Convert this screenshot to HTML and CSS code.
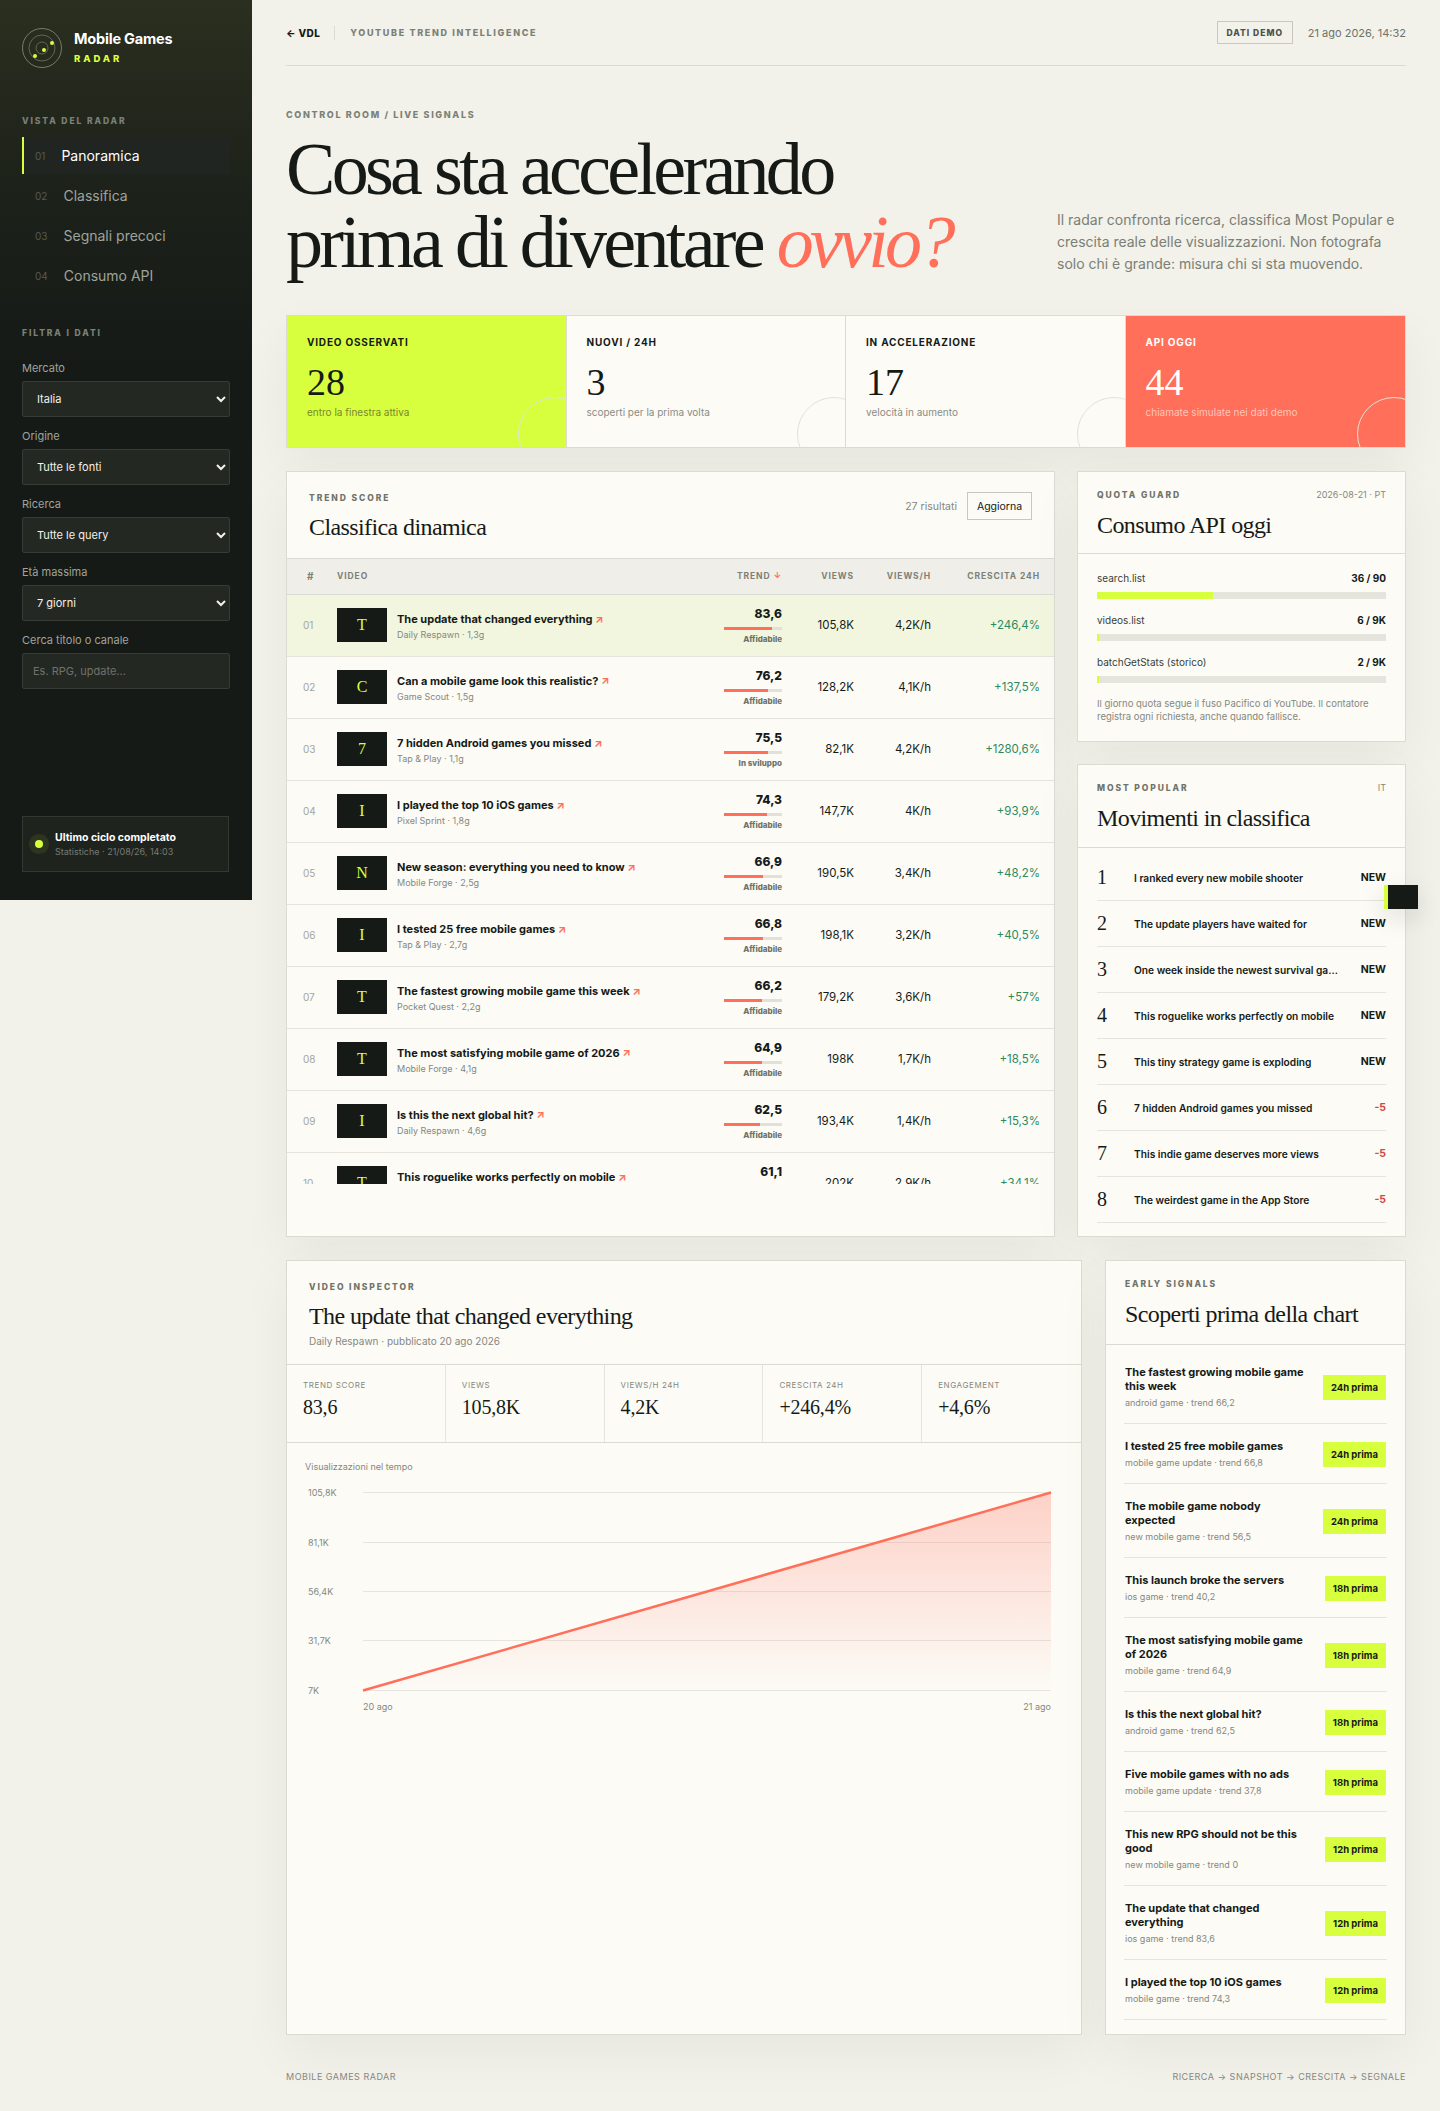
FILE: index.html
```html
<!DOCTYPE html>
<html lang="it">
<head>
  <meta charset="UTF-8" />
  <meta name="viewport" content="width=device-width, initial-scale=1.0"/>
  <title>Mobile Games Radar</title>
  <link rel="stylesheet" href="styles.css">
</head>
<body>
  <div class="layout">
    <aside class="sidebar">
      <div class="brand">
        <svg class="brand-mark" width="40" height="40" viewBox="0 0 40 40">
          <circle cx="20" cy="20" r="19.5" fill="none" stroke="#8b8f80" stroke-width="0.8"/>
          <circle cx="20" cy="20" r="13" fill="none" stroke="#6f7366" stroke-width="0.8"/>
          <circle cx="20" cy="20" r="6" fill="none" stroke="#6f7366" stroke-width="0.8"/>
          <circle cx="30" cy="15" r="2" fill="#d8ff3e"/>
          <circle cx="22" cy="22" r="2" fill="#d8ff3e"/>
          <circle cx="13" cy="28" r="2" fill="#d8ff3e"/>
        </svg>
        <div>
          <div class="brand-name">Mobile Games</div>
          <div class="brand-sub">RADAR</div>
        </div>
      </div>

      <div class="side-label">VISTA DEL RADAR</div>
      <nav class="nav">
        <a class="nav-item active"><span class="nav-num">01</span>Panoramica</a>
        <a class="nav-item"><span class="nav-num">02</span>Classifica</a>
        <a class="nav-item"><span class="nav-num">03</span>Segnali precoci</a>
        <a class="nav-item"><span class="nav-num">04</span>Consumo API</a>
      </nav>

      <div class="side-label filter-label">FILTRA I DATI</div>
      <label class="field">Mercato
        <select><option>Italia</option></select>
      </label>
      <label class="field">Origine
        <select><option>Tutte le fonti</option></select>
      </label>
      <label class="field">Ricerca
        <select><option>Tutte le query</option></select>
      </label>
      <label class="field">Età massima
        <select><option>7 giorni</option></select>
      </label>
      <label class="field">Cerca titolo o canale
        <input type="text" placeholder="Es. RPG, update...">
      </label>

      <div class="cycle">
        <span class="cycle-dot"></span>
        <div>
          <div class="cycle-title">Ultimo ciclo completato</div>
          <div class="cycle-sub">Statistiche · 21/08/26, 14:03</div>
        </div>
      </div>
    </aside>

    <main class="main">
      <header class="topbar">
        <div class="topbar-left">
          <a class="back">← VDL</a>
          <span class="topbar-title">YOUTUBE TREND INTELLIGENCE</span>
        </div>
        <div class="topbar-right">
          <span class="demo-tag">DATI DEMO</span>
          <span class="topbar-date">21 ago 2026, 14:32</span>
        </div>
      </header>

      <section class="hero">
        <div>
          <p class="hero-kicker">CONTROL ROOM / LIVE SIGNALS</p>
          <h1>Cosa sta accelerando<br>prima di diventare <em>ovvio?</em></h1>
        </div>
        <p class="hero-text">Il radar confronta ricerca, classifica Most Popular e crescita reale delle visualizzazioni. Non fotografa solo chi è grande: misura chi si sta muovendo.</p>
      </section>

      <section class="stats">
        <div class="stat lime">
          <div class="stat-label">VIDEO OSSERVATI</div>
          <div class="stat-value">28</div>
          <div class="stat-sub">entro la finestra attiva</div>
        </div>
        <div class="stat">
          <div class="stat-label">NUOVI / 24H</div>
          <div class="stat-value">3</div>
          <div class="stat-sub">scoperti per la prima volta</div>
        </div>
        <div class="stat">
          <div class="stat-label">IN ACCELERAZIONE</div>
          <div class="stat-value">17</div>
          <div class="stat-sub">velocità in aumento</div>
        </div>
        <div class="stat coral">
          <div class="stat-label">API OGGI</div>
          <div class="stat-value">44</div>
          <div class="stat-sub">chiamate simulate nei dati demo</div>
        </div>
      </section>

      <section class="grid-top">
        <div class="panel rank-panel">
          <div class="rank-head">
            <div>
              <div class="eyebrow">TREND SCORE</div>
              <h2>Classifica dinamica</h2>
            </div>
            <div class="rank-tools">
              <span class="rank-count">27 risultati</span>
              <button class="refresh">Aggiorna</button>
            </div>
          </div>
          <div class="table-wrap">
            <table class="rank-table">
              <thead>
                <tr>
                  <th class="col-num">#</th>
                  <th class="col-video">VIDEO</th>
                  <th class="col-trend">TREND <span class="sort">↓</span></th>
                  <th class="col-views">VIEWS</th>
                  <th class="col-vph">VIEWS/H</th>
                  <th class="col-growth">CRESCITA 24H</th>
                </tr>
              </thead>
              <tbody>
                <tr class="selected">
                  <td class="col-num">01</td>
                  <td class="col-video"><div class="video"><span class="thumb">T</span><div><div class="video-title">The update that changed everything <span class="go">↗</span></div><div class="video-meta">Daily Respawn · 1,3g</div></div></div></td>
                  <td class="col-trend"><div class="score">83,6</div><div class="score-bar"><span style="width:83.6%"></span></div><div class="score-tag">Affidabile</div></td>
                  <td class="col-views">105,8K</td>
                  <td class="col-vph">4,2K/h</td>
                  <td class="col-growth">+246,4%</td>
                </tr>
                <tr>
                  <td class="col-num">02</td>
                  <td class="col-video"><div class="video"><span class="thumb">C</span><div><div class="video-title">Can a mobile game look this realistic? <span class="go">↗</span></div><div class="video-meta">Game Scout · 1,5g</div></div></div></td>
                  <td class="col-trend"><div class="score">76,2</div><div class="score-bar"><span style="width:76.2%"></span></div><div class="score-tag">Affidabile</div></td>
                  <td class="col-views">128,2K</td>
                  <td class="col-vph">4,1K/h</td>
                  <td class="col-growth">+137,5%</td>
                </tr>
                <tr>
                  <td class="col-num">03</td>
                  <td class="col-video"><div class="video"><span class="thumb">7</span><div><div class="video-title">7 hidden Android games you missed <span class="go">↗</span></div><div class="video-meta">Tap &amp; Play · 1,1g</div></div></div></td>
                  <td class="col-trend"><div class="score">75,5</div><div class="score-bar"><span style="width:75.5%"></span></div><div class="score-tag">In sviluppo</div></td>
                  <td class="col-views">82,1K</td>
                  <td class="col-vph">4,2K/h</td>
                  <td class="col-growth">+1280,6%</td>
                </tr>
                <tr>
                  <td class="col-num">04</td>
                  <td class="col-video"><div class="video"><span class="thumb">I</span><div><div class="video-title">I played the top 10 iOS games <span class="go">↗</span></div><div class="video-meta">Pixel Sprint · 1,8g</div></div></div></td>
                  <td class="col-trend"><div class="score">74,3</div><div class="score-bar"><span style="width:74.3%"></span></div><div class="score-tag">Affidabile</div></td>
                  <td class="col-views">147,7K</td>
                  <td class="col-vph">4K/h</td>
                  <td class="col-growth">+93,9%</td>
                </tr>
                <tr>
                  <td class="col-num">05</td>
                  <td class="col-video"><div class="video"><span class="thumb">N</span><div><div class="video-title">New season: everything you need to know <span class="go">↗</span></div><div class="video-meta">Mobile Forge · 2,5g</div></div></div></td>
                  <td class="col-trend"><div class="score">66,9</div><div class="score-bar"><span style="width:66.9%"></span></div><div class="score-tag">Affidabile</div></td>
                  <td class="col-views">190,5K</td>
                  <td class="col-vph">3,4K/h</td>
                  <td class="col-growth">+48,2%</td>
                </tr>
                <tr>
                  <td class="col-num">06</td>
                  <td class="col-video"><div class="video"><span class="thumb">I</span><div><div class="video-title">I tested 25 free mobile games <span class="go">↗</span></div><div class="video-meta">Tap &amp; Play · 2,7g</div></div></div></td>
                  <td class="col-trend"><div class="score">66,8</div><div class="score-bar"><span style="width:66.8%"></span></div><div class="score-tag">Affidabile</div></td>
                  <td class="col-views">198,1K</td>
                  <td class="col-vph">3,2K/h</td>
                  <td class="col-growth">+40,5%</td>
                </tr>
                <tr>
                  <td class="col-num">07</td>
                  <td class="col-video"><div class="video"><span class="thumb">T</span><div><div class="video-title">The fastest growing mobile game this week <span class="go">↗</span></div><div class="video-meta">Pocket Quest · 2,2g</div></div></div></td>
                  <td class="col-trend"><div class="score">66,2</div><div class="score-bar"><span style="width:66.2%"></span></div><div class="score-tag">Affidabile</div></td>
                  <td class="col-views">179,2K</td>
                  <td class="col-vph">3,6K/h</td>
                  <td class="col-growth">+57%</td>
                </tr>
                <tr>
                  <td class="col-num">08</td>
                  <td class="col-video"><div class="video"><span class="thumb">T</span><div><div class="video-title">The most satisfying mobile game of 2026 <span class="go">↗</span></div><div class="video-meta">Mobile Forge · 4,1g</div></div></div></td>
                  <td class="col-trend"><div class="score">64,9</div><div class="score-bar"><span style="width:64.9%"></span></div><div class="score-tag">Affidabile</div></td>
                  <td class="col-views">198K</td>
                  <td class="col-vph">1,7K/h</td>
                  <td class="col-growth">+18,5%</td>
                </tr>
                <tr>
                  <td class="col-num">09</td>
                  <td class="col-video"><div class="video"><span class="thumb">I</span><div><div class="video-title">Is this the next global hit? <span class="go">↗</span></div><div class="video-meta">Daily Respawn · 4,6g</div></div></div></td>
                  <td class="col-trend"><div class="score">62,5</div><div class="score-bar"><span style="width:62.5%"></span></div><div class="score-tag">Affidabile</div></td>
                  <td class="col-views">193,4K</td>
                  <td class="col-vph">1,4K/h</td>
                  <td class="col-growth">+15,3%</td>
                </tr>
                <tr>
                  <td class="col-num">10</td>
                  <td class="col-video"><div class="video"><span class="thumb">T</span><div><div class="video-title">This roguelike works perfectly on mobile <span class="go">↗</span></div><div class="video-meta">Pocket Quest · 3,4g</div></div></div></td>
                  <td class="col-trend"><div class="score">61,1</div><div class="score-bar"><span style="width:61.1%"></span></div><div class="score-tag">Affidabile</div></td>
                  <td class="col-views">202K</td>
                  <td class="col-vph">2,9K/h</td>
                  <td class="col-growth">+34,1%</td>
                </tr>
              </tbody>
            </table>
          </div>
        </div>

        <div class="side-stack">
          <div class="panel">
            <div class="panel-head">
              <div class="eyebrow-row"><span class="eyebrow">QUOTA GUARD</span><span class="eyebrow-note">2026-08-21 · PT</span></div>
              <h3>Consumo API oggi</h3>
            </div>
            <div class="quota">
              <div class="quota-row"><div class="quota-line"><span>search.list</span><b>36 / 90</b></div><div class="quota-bar"><span style="width:40%"></span></div></div>
              <div class="quota-row"><div class="quota-line"><span>videos.list</span><b>6 / 9K</b></div><div class="quota-bar"><span style="width:0.8%"></span></div></div>
              <div class="quota-row"><div class="quota-line"><span>batchGetStats (storico)</span><b>2 / 9K</b></div><div class="quota-bar"><span style="width:0.8%"></span></div></div>
              <p class="quota-note">Il giorno quota segue il fuso Pacifico di YouTube. Il contatore registra ogni richiesta, anche quando fallisce.</p>
            </div>
          </div>

          <div class="panel grow">
            <div class="panel-head tall">
              <div class="eyebrow-row"><span class="eyebrow">MOST POPULAR</span><span class="eyebrow-note">IT</span></div>
              <h3>Movimenti in classifica</h3>
            </div>
            <ol class="moves">
              <li><span class="move-rank">1</span><span class="move-title">I ranked every new mobile shooter</span><span class="move-delta">NEW</span></li>
              <li><span class="move-rank">2</span><span class="move-title">The update players have waited for</span><span class="move-delta">NEW</span></li>
              <li><span class="move-rank">3</span><span class="move-title">One week inside the newest survival game on mobile</span><span class="move-delta">NEW</span></li>
              <li><span class="move-rank">4</span><span class="move-title">This roguelike works perfectly on mobile</span><span class="move-delta">NEW</span></li>
              <li><span class="move-rank">5</span><span class="move-title">This tiny strategy game is exploding</span><span class="move-delta">NEW</span></li>
              <li><span class="move-rank">6</span><span class="move-title">7 hidden Android games you missed</span><span class="move-delta down">-5</span></li>
              <li><span class="move-rank">7</span><span class="move-title">This indie game deserves more views</span><span class="move-delta down">-5</span></li>
              <li><span class="move-rank">8</span><span class="move-title">The weirdest game in the App Store</span><span class="move-delta down">-5</span></li>
            </ol>
          </div>
        </div>
      </section>

      <section class="grid-bottom">
        <div class="panel">
          <div class="inspector-head">
            <div class="eyebrow">VIDEO INSPECTOR</div>
            <h2>The update that changed everything</h2>
            <div class="inspector-sub">Daily Respawn · pubblicato 20 ago 2026</div>
          </div>
          <div class="metrics">
            <div class="metric"><div class="metric-label">TREND SCORE</div><div class="metric-value">83,6</div></div>
            <div class="metric"><div class="metric-label">VIEWS</div><div class="metric-value">105,8K</div></div>
            <div class="metric"><div class="metric-label">VIEWS/H 24H</div><div class="metric-value">4,2K</div></div>
            <div class="metric"><div class="metric-label">CRESCITA 24H</div><div class="metric-value">+246,4%</div></div>
            <div class="metric"><div class="metric-label">ENGAGEMENT</div><div class="metric-value">+4,6%</div></div>
          </div>
          <div class="chart">
            <div class="chart-title">Visualizzazioni nel tempo</div>
            <svg class="chart-svg" width="764" height="240" viewBox="0 0 764 240">
              <defs>
                <linearGradient id="area" x1="0" y1="0" x2="0" y2="1">
                  <stop offset="0" stop-color="#ff6f59" stop-opacity="0.3"/>
                  <stop offset="1" stop-color="#ff6f59" stop-opacity="0"/>
                </linearGradient>
              </defs>
              <g stroke="#e6e5dd" stroke-width="1">
                <line x1="61" x2="749" y1="11.5" y2="11.5"/>
                <line x1="61" x2="749" y1="61.5" y2="61.5"/>
                <line x1="61" x2="749" y1="110.5" y2="110.5"/>
                <line x1="61" x2="749" y1="159.5" y2="159.5"/>
                <line x1="61" x2="749" y1="209.5" y2="209.5"/>
              </g>
              <path d="M61 209.5 L749 11.5 L749 209.5 Z" fill="url(#area)"/>
              <path d="M61 209.5 L749 11.5" fill="none" stroke="#ff6f59" stroke-width="2.5"/>
              <g class="chart-label">
                <text x="6" y="15">105,8K</text>
                <text x="6" y="65">81,1K</text>
                <text x="6" y="114">56,4K</text>
                <text x="6" y="163">31,7K</text>
                <text x="6" y="213">7K</text>
                <text x="61" y="229">20 ago</text>
                <text x="749" y="229" text-anchor="end">21 ago</text>
              </g>
            </svg>
          </div>
        </div>

        <div class="panel">
          <div class="panel-head taller">
            <div class="eyebrow">EARLY SIGNALS</div>
            <h3>Scoperti prima della chart</h3>
          </div>
          <ul class="signals">
            <li><div><div class="signal-title">The fastest growing mobile game this week</div><div class="signal-meta">android game · trend 66,2</div></div><span class="signal-tag">24h prima</span></li>
            <li><div><div class="signal-title">I tested 25 free mobile games</div><div class="signal-meta">mobile game update · trend 66,8</div></div><span class="signal-tag">24h prima</span></li>
            <li><div><div class="signal-title">The mobile game nobody expected</div><div class="signal-meta">new mobile game · trend 56,5</div></div><span class="signal-tag">24h prima</span></li>
            <li><div><div class="signal-title">This launch broke the servers</div><div class="signal-meta">ios game · trend 40,2</div></div><span class="signal-tag">18h prima</span></li>
            <li><div><div class="signal-title">The most satisfying mobile game of 2026</div><div class="signal-meta">mobile game · trend 64,9</div></div><span class="signal-tag">18h prima</span></li>
            <li><div><div class="signal-title">Is this the next global hit?</div><div class="signal-meta">android game · trend 62,5</div></div><span class="signal-tag">18h prima</span></li>
            <li><div><div class="signal-title">Five mobile games with no ads</div><div class="signal-meta">mobile game update · trend 37,8</div></div><span class="signal-tag">18h prima</span></li>
            <li><div><div class="signal-title">This new RPG should not be this good</div><div class="signal-meta">new mobile game · trend 0</div></div><span class="signal-tag">12h prima</span></li>
            <li><div><div class="signal-title">The update that changed everything</div><div class="signal-meta">ios game · trend 83,6</div></div><span class="signal-tag">12h prima</span></li>
            <li><div><div class="signal-title">I played the top 10 iOS games</div><div class="signal-meta">mobile game · trend 74,3</div></div><span class="signal-tag">12h prima</span></li>
          </ul>
        </div>
      </section>

      <footer class="footer">
        <span>MOBILE GAMES RADAR</span>
        <span>RICERCA → SNAPSHOT → CRESCITA → SEGNALE</span>
      </footer>
    </main>
  </div>
  <div class="float-tab"></div>
</body>
</html>
```

FILE: styles.css
```css
* {
  box-sizing: border-box;
}
html, body {
  margin: 0;
  padding: 0;
}
body {
  background: #f2f1ea;
  color: #151a17;
  font-family: Inter, sans-serif;
  position: relative;
  height: 2111px;
  overflow: hidden;
}
.layout {
  display: flex;
  align-items: flex-start;
}

/* sidebar */
.sidebar {
  width: 252px;
  height: 900px;
  flex-shrink: 0;
  padding: 28px 22px 0;
  color: #fff;
  background: linear-gradient(180deg, #2b2f1f 0%, #1c211a 22%, #151a17 40%);
  position: relative;
}
.brand {
  display: flex;
  align-items: center;
  gap: 12px;
  height: 40px;
}
.brand-name {
  font-weight: 700;
  font-size: 14.5px;
  letter-spacing: -0.2px;
  line-height: 18px;
}
.brand-sub {
  font-weight: 800;
  font-size: 9.5px;
  letter-spacing: 2.9px;
  color: #d8ff3e;
  line-height: 14px;
  margin-top: 4px;
}
.side-label {
  font-weight: 800;
  font-size: 8.5px;
  letter-spacing: 1.9px;
  color: #7c8176;
  margin-top: 47px;
  line-height: 12px;
}
.nav {
  margin-top: 10px;
  display: flex;
  flex-direction: column;
  gap: 3px;
}
.nav-item {
  height: 37px;
  display: flex;
  align-items: center;
  padding-left: 11px;
  font-size: 14px;
  color: #a0a39b;
  border-left: 2px solid transparent;
}
.nav-item.active {
  background: #212521;
  border-left-color: #d8ff3e;
  color: #fff;
}
.nav-num {
  margin-right: 16px;
  font-size: 10px;
  color: #565a52;
}
.filter-label {
  margin-top: 33px;
  margin-bottom: 23px;
}
.field {
  display: block;
  font-size: 11px;
  color: #a0a39b;
  line-height: 13px;
  margin-bottom: 13px;
}
.field select, .field input {
  display: block;
  width: 100%;
  height: 36px;
  margin-top: 6px;
  background: #242823;
  border: 1px solid #373b35;
  border-radius: 2px;
  color: #f2f1ea;
  font-family: Inter, sans-serif;
  font-size: 11px;
  padding: 0 10px;
}
.field input::placeholder {
  color: #6f736a;
}
.cycle {
  position: absolute;
  left: 22px;
  right: 23px;
  top: 816px;
  height: 56px;
  display: flex;
  align-items: center;
  gap: 8px;
  padding: 0 8px;
  background: #1f231e;
  border: 1px solid #343832;
}
.cycle-dot {
  width: 8px;
  height: 8px;
  margin: 0 4px;
  flex-shrink: 0;
  border-radius: 50%;
  background: #d8ff3e;
  box-shadow: 0 0 0 6px rgba(216, 255, 62, 0.08);
}
.cycle-title {
  font-weight: 700;
  font-size: 10.5px;
  line-height: 15px;
}
.cycle-sub {
  font-size: 9px;
  color: #777b72;
  line-height: 14px;
}

/* main column */
.main {
  width: 1188px;
  padding: 0 34px;
}
.topbar {
  height: 66px;
  display: flex;
  justify-content: space-between;
  align-items: center;
  border-bottom: 1px solid #dcdbd3;
}
.topbar-left, .topbar-right {
  display: flex;
  align-items: center;
}
.back {
  font-weight: 800;
  font-size: 10px;
  letter-spacing: 0.4px;
  padding-right: 14px;
  border-right: 1px solid #dcdbd3;
  line-height: 14px;
}
.topbar-title {
  font-weight: 800;
  font-size: 9px;
  letter-spacing: 1.65px;
  color: #7c8176;
  padding-left: 15px;
}
.demo-tag {
  font-weight: 800;
  font-size: 8.5px;
  letter-spacing: 1px;
  color: #4d514a;
  border: 1px solid #c9c8c0;
  height: 23px;
  width: 76px;
  display: flex;
  align-items: center;
  justify-content: center;
}
.topbar-date {
  font-size: 11px;
  color: #6f736a;
  margin-left: 15px;
}
.hero {
  display: flex;
  justify-content: space-between;
  align-items: flex-end;
  height: 249px;
  padding-bottom: 36px;
}
.hero-kicker {
  font-weight: 800;
  font-size: 9px;
  letter-spacing: 1.65px;
  color: #7c8176;
  margin: 0 0 12px;
  line-height: 12px;
}
h1 {
  margin: 0;
  font-family: "Liberation Serif", serif;
  font-weight: 400;
  font-size: 74px;
  letter-spacing: -3.7px;
  line-height: 73px;
}
h1 em {
  color: #ff6f59;
}
.hero-text {
  width: 349px;
  margin: 0 0 4px;
  font-size: 14px;
  line-height: 22px;
  color: #7b7f75;
}
.stats {
  display: grid;
  grid-template-columns: repeat(4, 1fr);
  height: 133px;
  border: 1px solid #dcdbd3;
  background: #fcfbf6;
  box-shadow: 0 18px 50px rgba(21, 26, 23, 0.05);
}
.stat {
  position: relative;
  overflow: hidden;
  padding: 20px 20px 0;
  border-right: 1px solid #dcdbd3;
}
.stat:last-child {
  border-right: 0;
}
.stat::after {
  content: "";
  position: absolute;
  right: -26px;
  bottom: -24px;
  width: 72px;
  height: 72px;
  border: 1px solid #e3e2da;
  border-radius: 50%;
}
.stat.lime {
  background: #d8ff3e;
}
.stat.coral {
  background: #ff6f59;
  color: #fff;
}
.stat-label {
  font-weight: 700;
  font-size: 10px;
  letter-spacing: 0.8px;
  line-height: 12px;
}
.stat-value {
  font-family: "Liberation Serif", serif;
  font-size: 38px;
  line-height: 40px;
  margin-top: 14px;
}
.stat-sub {
  font-size: 10px;
  line-height: 14px;
  margin-top: 3px;
  color: #8a8c84;
}
.stat.lime .stat-sub {
  color: #78882d;
}
.stat.coral .stat-sub {
  color: #ffc4ba;
}

/* panels */
.panel {
  background: #fcfbf6;
  border: 1px solid #dcdbd3;
  box-shadow: 0 18px 50px rgba(21, 26, 23, 0.05);
}
.eyebrow {
  font-weight: 800;
  font-size: 8.5px;
  letter-spacing: 1.9px;
  color: #6f736a;
  line-height: 12px;
}
h2, h3 {
  margin: 0;
  font-family: "Liberation Serif", serif;
  font-weight: 400;
  font-size: 24px;
  letter-spacing: -0.6px;
  line-height: 28px;
}
.grid-top {
  display: grid;
  grid-template-columns: 769px 329px;
  gap: 22px;
  margin-top: 23px;
}
.rank-panel {
  height: 766px;
}
.rank-head {
  height: 86px;
  padding: 20px 22px 0;
  display: flex;
  justify-content: space-between;
}
.rank-head h2 {
  margin-top: 9px;
}
.rank-tools {
  display: flex;
  align-items: center;
  height: 28px;
  gap: 10px;
}
.rank-count {
  font-size: 10.5px;
  color: #85887f;
}
.refresh {
  height: 28px;
  width: 65px;
  background: none;
  border: 1px solid #c9c8c0;
  font-family: Inter, sans-serif;
  font-size: 10.5px;
  color: #151a17;
  padding: 0;
}
.table-wrap {
  height: 626px;
  overflow: hidden;
  border-top: 1px solid #dcdbd3;
}
.rank-table {
  width: 100%;
  table-layout: fixed;
  border-collapse: collapse;
}
.rank-table th {
  height: 35px;
  padding: 0;
  background: #efeee8;
  border-bottom: 1px solid #dcdbd3;
  font-weight: 700;
  font-size: 8.5px;
  letter-spacing: 0.9px;
  color: #7c8176;
  text-align: left;
  white-space: nowrap;
}
.rank-table td {
  height: 62px;
  padding: 0;
  border-bottom: 1px solid #e6e5dd;
  font-size: 11.5px;
}
.rank-table tr.selected td {
  background: #f2f6de;
}
.col-num {
  width: 50px;
  padding-left: 16px !important;
  color: #a3a69c;
  font-size: 10px !important;
}
th.col-num {
  padding-left: 20px !important;
}
.col-video {
  width: 336px;
}
.col-trend {
  width: 109px;
  text-align: right !important;
}
td.col-trend {
  padding-top: 2px !important;
}
.col-views {
  width: 72px;
  text-align: right !important;
}
.col-vph {
  width: 77px;
  text-align: right !important;
}
.col-growth {
  text-align: right !important;
  padding-right: 14px !important;
  color: #2c8a5c;
}
th.col-growth {
  color: #7c8176;
}
.sort, .go {
  color: #ff6f59;
}
.video {
  display: flex;
  align-items: center;
  gap: 10px;
}
.thumb {
  width: 50px;
  height: 34px;
  flex-shrink: 0;
  display: flex;
  align-items: center;
  justify-content: center;
  background: #151a17;
  color: #d8ff3e;
  font-family: "Liberation Serif", serif;
  font-size: 16px;
}
.video-title {
  font-weight: 700;
  font-size: 11px;
  line-height: 14px;
  padding-top: 2px;
}
.video-meta {
  font-size: 9px;
  line-height: 12px;
  margin-top: 3px;
  color: #85887f;
}
.score {
  font-weight: 800;
  font-size: 12px;
  line-height: 14px;
}
.score-bar {
  width: 58px;
  height: 3px;
  margin: 6px 0 4px auto;
  background: #e2e1d9;
}
.score-bar span {
  display: block;
  height: 100%;
  background: #ff6f59;
}
.score-tag {
  font-weight: 800;
  font-size: 8px;
  line-height: 11px;
  color: #6f736a;
}
.side-stack {
  display: flex;
  flex-direction: column;
  gap: 22px;
}
.grow {
  flex: 1;
}
.panel-head {
  padding: 17px 19px 0;
  height: 82px;
  border-bottom: 1px solid #dcdbd3;
}
.panel-head.tall {
  height: 83px;
}
.panel-head.taller {
  height: 84px;
}
.panel-head h3 {
  margin-top: 10px;
}
.eyebrow-row {
  display: flex;
  justify-content: space-between;
  align-items: center;
  line-height: 12px;
}
.eyebrow-note {
  font-size: 9px;
  color: #85887f;
}
.quota {
  padding: 17px 19px 0;
  height: 187px;
}
.quota-row {
  margin-bottom: 14px;
}
.quota-line {
  display: flex;
  justify-content: space-between;
  font-size: 10px;
  line-height: 14px;
  color: #3a3e39;
}
.quota-line b {
  font-weight: 700;
  color: #151a17;
}
.quota-bar {
  height: 7px;
  margin-top: 7px;
  background: #e6e5dd;
}
.quota-bar span {
  display: block;
  height: 100%;
  background: #d8ff3e;
}
.quota-note {
  margin: 0;
  font-size: 9.5px;
  line-height: 13px;
  color: #85887f;
}
.moves {
  list-style: none;
  margin: 0;
  padding: 7px 19px 0;
}
.moves li {
  height: 46px;
  display: flex;
  align-items: center;
  border-bottom: 1px solid #e6e5dd;
}
.move-rank {
  width: 37px;
  font-family: "Liberation Serif", serif;
  font-size: 20px;
}
.move-title {
  flex: 1;
  max-width: 204px;
  white-space: nowrap;
  overflow: hidden;
  text-overflow: ellipsis;
  font-weight: 600;
  font-size: 10.2px;
}
.move-delta {
  margin-left: auto;
  font-weight: 700;
  font-size: 10.5px;
}
.move-delta.down {
  color: #d1483f;
}
.grid-bottom {
  display: grid;
  grid-template-columns: 796px 301px;
  gap: 23px;
  margin-top: 23px;
  height: 775px;
}
.inspector-head {
  height: 104px;
  padding: 20px 22px 0;
  border-bottom: 1px solid #dcdbd3;
}
.inspector-head h2 {
  margin-top: 9px;
}
.inspector-sub {
  font-size: 10px;
  line-height: 14px;
  margin-top: 4px;
  color: #85887f;
}
.metrics {
  display: grid;
  grid-template-columns: repeat(5, 1fr);
  height: 78px;
  border-bottom: 1px solid #dcdbd3;
}
.metric {
  padding: 14px 16px 0;
  border-right: 1px solid #e6e5dd;
}
.metric:last-child {
  border-right: 0;
}
.metric-label {
  font-size: 8px;
  letter-spacing: 0.6px;
  color: #85887f;
  line-height: 12px;
}
.metric-value {
  font-family: "Liberation Serif", serif;
  font-size: 20px;
  letter-spacing: -0.2px;
  line-height: 24px;
  margin-top: 4px;
}
.chart {
  padding: 17px 15px 0;
}
.chart-title {
  font-size: 9px;
  line-height: 13px;
  padding-left: 3px;
  color: #85887f;
}
.chart-svg {
  display: block;
  margin-top: 8px;
}
.chart-label text {
  font-family: Inter, sans-serif;
  font-size: 9px;
  fill: #85887f;
}
.signals {
  list-style: none;
  margin: 0;
  padding: 5px 18px 0;
}
.signals li {
  display: flex;
  justify-content: space-between;
  align-items: center;
  gap: 16px;
  padding: 15px 1px 14px;
  border-bottom: 1px solid #e6e5dd;
}
.signal-title {
  font-weight: 700;
  font-size: 11px;
  line-height: 14px;
}
.signal-meta {
  font-size: 9px;
  line-height: 12px;
  margin-top: 4px;
  color: #85887f;
}
.signal-tag {
  flex-shrink: 0;
  padding: 0 8px;
  height: 25px;
  display: flex;
  align-items: center;
  background: #d8ff3e;
  font-weight: 700;
  font-size: 9.5px;
}
.footer {
  display: flex;
  justify-content: space-between;
  margin-top: 35px;
  font-size: 9px;
  letter-spacing: 0.5px;
  line-height: 14px;
  color: #85887f;
}
.float-tab {
  position: absolute;
  left: 1384px;
  top: 885px;
  width: 34px;
  height: 24px;
  background: #151a17;
  border-left: 4px solid #d8ff3e;
  box-shadow: 0 8px 24px rgba(21, 26, 23, 0.12);
}
```
